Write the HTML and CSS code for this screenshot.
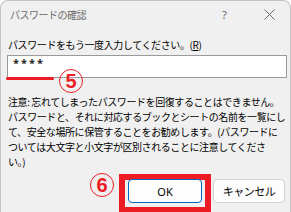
FILE: index.html
```html
<!DOCTYPE html>
<html lang="ja">
<head>
<meta charset="utf-8">
<link rel="stylesheet" href="styles.css">
</head>
<body>
<div class="dialog">
  <div class="titlebar">
    <span class="title">パスワードの確認</span>
    <span class="help">?</span>
    <span class="close">
      <svg width="11" height="11" viewBox="0 0 11 11"><path d="M0.5 0.5 L10.5 10.5 M10.5 0.5 L0.5 10.5" stroke="#6a6a6a" stroke-width="1" fill="none"/></svg>
    </span>
  </div>
  <div class="content">
    <div class="label">パスワードをもう一度入力してください。(<u>R</u>)</div>
    <div class="field-wrap">
      <div class="field">****</div>
      <div class="mark-line"></div>
      <div class="badge badge-5">5</div>
    </div>
    <div class="note">注意: 忘れてしまったパスワードを回復することはできません。<br>パスワードと、それに対応するブックとシートの名前を一覧にし<br>て、安全な場所に保管することをお勧めします。(パスワードに<br>ついては大文字と小文字が区別されることに注意してくださ<br>い。)</div>
    <div class="buttons">
      <div class="ok-wrap">
        <div class="badge badge-6">6</div>
        <div class="red-box"></div>
        <div class="btn btn-ok">OK</div>
      </div>
      <div class="btn btn-cancel">キャンセル</div>
    </div>
  </div>
</div>
</body>
</html>
```
FILE: styles.css
```css
html, body {
  margin: 0;
  padding: 0;
  background: #ffffff;
}
.dialog {
  width: 291px;
  height: 212px;
  box-sizing: border-box;
  background: #f0f0f0;
  border: 1px solid #c4c4c4;
  border-bottom: none;
  border-radius: 8px 8px 0 0;
  overflow: hidden;
  font-family: "Noto Sans CJK JP", "Noto Sans", sans-serif;
  color: #000;
  position: relative;
}
.titlebar {
  height: 27px;
  display: flex;
  align-items: center;
  padding-left: 9px;
}
.title {
  font-size: 10px;
  letter-spacing: -0.5px;
  color: #6b6b6b;
  flex: 1;
}
.help {
  font-size: 11px;
  color: #6b6b6b;
  width: 12px;
  margin-right: 30px;
  font-family: "Noto Sans", sans-serif;
}
.close {
  width: 11px;
  height: 11px;
  margin-right: 15px;
  display: flex;
}
.content {
  padding: 0 5px 0 6px;
}
.label {
  margin-top: 10px;
  font-size: 10px;
  line-height: 14px;
  letter-spacing: -0.4px;
  padding-left: 1px;
  white-space: nowrap;
}
.label u {
  text-underline-offset: 1px;
}
.field-wrap {
  position: relative;
  margin-top: 3px;
}
.field {
  height: 21px;
  width: 273px;
  background: #fff;
  border: 1px solid #9a9a9a;
  font-size: 11px;
  line-height: 14px;
  letter-spacing: 2px;
  padding-left: 5px;
  box-sizing: content-box;
  font-family: "Noto Sans", sans-serif;
  font-weight: bold;
  color: #222;
}
.mark-line {
  position: absolute;
  left: -1px;
  top: 22px;
  width: 48px;
  height: 3px;
  border-radius: 2px;
  background: #ec1c24;
}
.badge {
  position: absolute;
  width: 22px;
  height: 22px;
  border: 1.5px solid #ec1c24;
  border-radius: 50%;
  color: #ec1c24;
  font-family: "Liberation Sans", sans-serif;
  font-weight: bold;
  font-size: 20px;
  line-height: 23px;
  text-align: center;
}
.badge-5 {
  left: 52px;
  top: 14px;
}
.badge-6 {
  left: -38px;
  top: -6px;
}
.note {
  margin-top: 16px;
  padding-left: 1px;
  font-size: 10px;
  line-height: 15px;
  letter-spacing: -0.42px;
  white-space: nowrap;
}
.buttons {
  display: flex;
  margin-top: 10px;
  padding-left: 121px;
  gap: 11px;
}
.ok-wrap {
  position: relative;
}
.red-box {
  position: absolute;
  left: -9px;
  top: -5px;
  right: -9px;
  bottom: -10px;
  border: 6px solid #ec1c24;
}
.btn {
  height: 22px;
  box-sizing: content-box;
  border-radius: 4px;
  background: #fdfdfd;
  display: flex;
  align-items: center;
  justify-content: center;
  font-size: 11px;
  position: relative;
}
.btn-ok {
  width: 72px;
  border: 1px solid #0067c0;
  font-family: "Noto Sans", sans-serif;
}
.btn-cancel {
  width: 70px;
  border: 1px solid #d0d0d0;
  letter-spacing: -0.5px;
}
```
